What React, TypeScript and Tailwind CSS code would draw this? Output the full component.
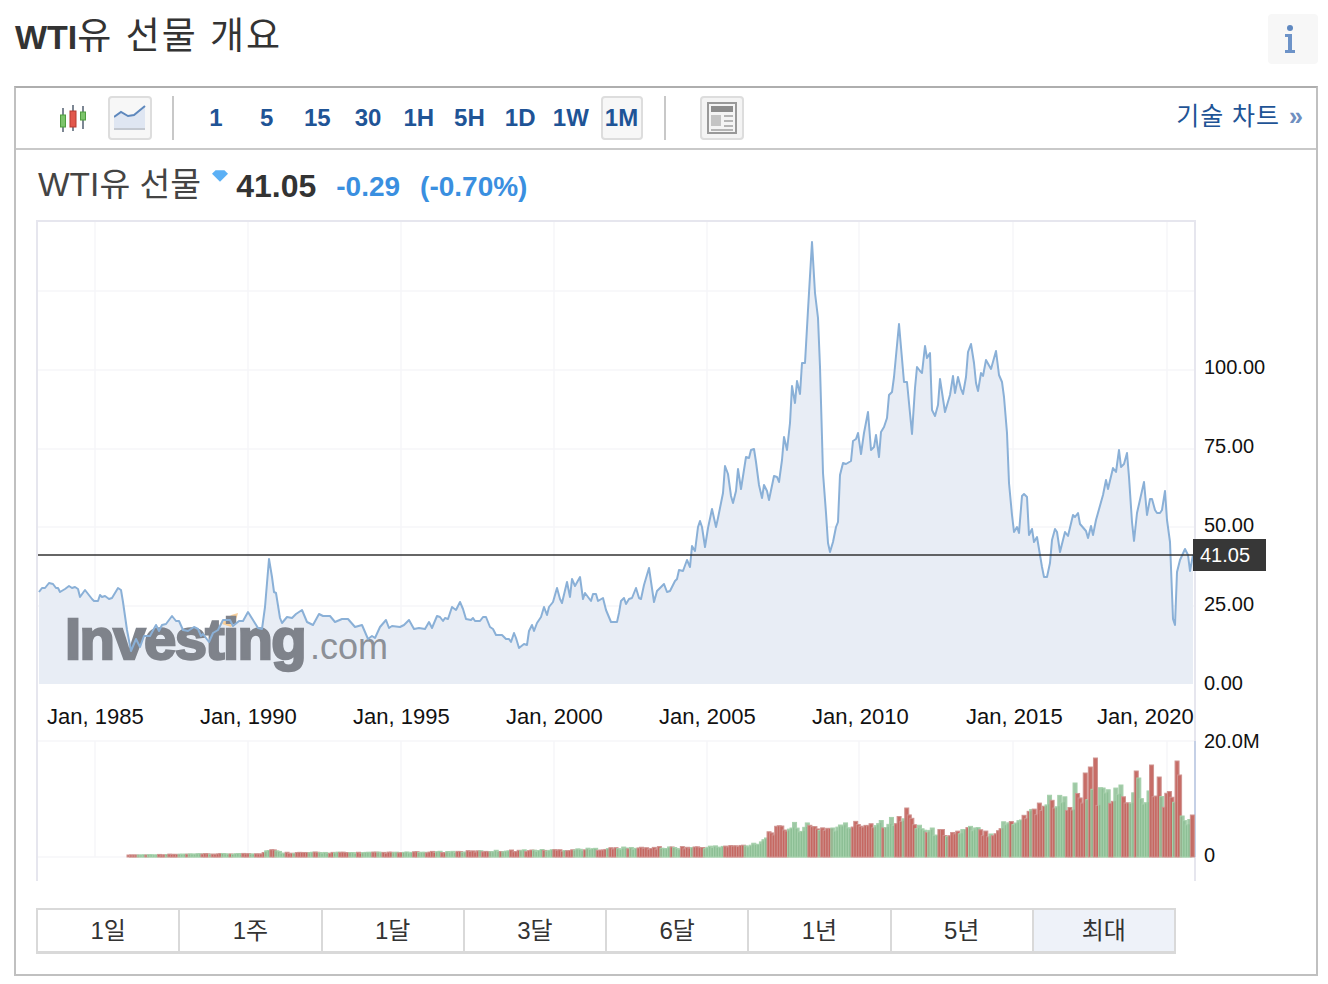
import React from "react";

const font = "[font-family:'Liberation_Sans','Noto_Sans_CJK_KR',sans-serif]";

// price line, page coordinates
const line =
  "39,592 42,588 45,588 49,583 53,584 56,588 58,588 60,592 65,589 69,586 72,588 75,587 78,589 80,597 85,590 92,599 94,601 98,601 100,595 102,597 105,596 109,599 112,598 118,588 121,590 123,602 127,630 131,651 136,639 140,647 144,636 150,636 156,625 159,631 162,625 166,624 172,616 176,621 179,621 183,630 188,631 194,627 198,629 201,636 203,634 209,642 213,633 218,630 223,620 230,620 233,626 239,621 243,621 248,612 253,620 258,628 262,629 265,607 269,559 272,577 274,592 276,593 280,618 282,623 287,617 292,618 296,614 302,610 307,622 313,625 319,614 323,616 330,616 335,622 342,619 348,619 355,627 362,625 368,639 372,636 375,638 380,627 386,620 389,628 392,626 400,627 404,625 409,620 414,629 419,628 425,629 429,622 432,628 437,616 440,617 443,621 445,618 448,619 452,607 456,610 460,602 463,609 466,619 471,620 473,618 475,621 480,621 483,617 486,617 490,627 493,629 496,635 502,635 506,639 509,639 511,642 514,633 516,638 519,648 524,644 527,645 529,631 532,625 534,631 537,623 541,617 544,607 547,615 549,607 553,602 557,588 560,599 562,603 567,582 570,597 572,579 575,586 580,577 583,599 585,593 591,601 593,594 596,594 598,601 603,598 606,610 611,622 613,622 617,622 619,613 621,601 624,598 626,604 629,599 632,598 636,588 639,598 641,599 644,585 649,568 654,602 657,591 664,584 667,592 670,591 675,581 677,579 679,570 683,571 687,560 690,567 692,546 695,551 698,527 700,521 702,527 705,547 708,528 712,509 716,527 718,518 723,493 725,466 728,474 731,496 733,503 736,491 738,469 741,489 746,457 749,458 751,450 754,449 756,462 759,485 762,498 764,485 767,491 769,500 774,476 777,477 779,482 782,460 784,437 787,450 790,423 792,386 795,403 797,381 800,394 802,363 805,363 808,310 812,242 815,293 818,318 820,367 823,473 826,513 828,543 830,552 833,542 836,527 838,522 840,475 843,463 846,464 851,461 853,441 856,439 858,433 861,454 864,433 868,412 871,450 874,447 876,435 879,457 881,432 884,427 887,418 889,395 892,392 894,377 899,324 904,382 907,382 909,403 912,434 915,388 917,367 920,371 922,373 925,346 927,358 930,353 932,410 935,416 938,405 940,379 945,412 950,395 953,376 955,393 958,377 961,389 963,394 966,377 968,352 971,344 974,363 976,383 978,391 981,373 983,376 986,360 991,369 996,351 999,375 1002,382 1004,397 1007,433 1009,483 1012,515 1014,532 1017,527 1019,533 1022,496 1024,494 1027,497 1029,535 1032,529 1034,542 1037,537 1042,567 1044,577 1047,577 1050,563 1052,540 1055,529 1057,532 1060,552 1065,532 1068,536 1073,515 1075,517 1078,513 1080,524 1086,531 1088,538 1091,526 1093,535 1096,520 1103,495 1106,480 1108,489 1113,468 1116,472 1119,450 1121,467 1124,464 1127,453 1129,477 1132,522 1134,541 1137,513 1144,482 1147,515 1150,499 1152,499 1155,510 1157,513 1160,513 1162,510 1165,491 1167,520 1170,542 1173,619 1175,625 1177,572 1180,560 1185,549 1188,555 1190,571 1193,555";

// volume envelope: x, height above the zero line
const envelope: [number, number][] = [
  [127, 2], [170, 3], [260, 4], [268, 9], [280, 5], [400, 5], [500, 7], [560, 8], [620, 10], [700, 11],
  [745, 13], [760, 18], [768, 29], [790, 35], [830, 33], [860, 38], [900, 42], [906, 46], [925, 30],
  [950, 27], [970, 32], [990, 27], [1000, 36], [1020, 46], [1040, 60], [1050, 66], [1065, 62],
  [1090, 70], [1170, 68], [1180, 40], [1193, 38],
];

// the bars that stand out in the last few years
const peaks: [number, number, boolean][] = [
  [906, 49, true], [1072, 74, false], [1082, 84, true], [1088, 90, true], [1094, 99, true], [1119, 85, true],
  [1120, 72, false], [1133, 86, true], [1138, 79, false], [1149, 92, true], [1157, 80, true], [1175, 96, true],
  [1178, 82, true], [1181, 41, false], [1191, 42, true],
];

const volumeAt = (x: number) => {
  for (let i = 1; i < envelope.length; i++) {
    const [x0, h0] = envelope[i - 1];
    const [x1, h1] = envelope[i];
    if (x <= x1) return h0 + ((h1 - h0) * (x - x0)) / (x1 - x0);
  }
  return 36;
};

const bars = Array.from({ length: 418 }, (_, i) => {
  const x = 127 + i * 2.55;
  const n = Math.abs(Math.sin(i * 12.9898) * 43758.5453) % 1;
  const m = Math.sin(i * 0.37 + 1.7) + Math.sin(i * 1.13);
  const h = volumeAt(x) * (0.72 + n * 0.28);
  return { x, h: Math.max(2, h), red: m > 0 };
});

for (const [px, ph, red] of peaks) {
  const i = Math.round((px - 127) / 2.55);
  if (bars[i]) bars[i] = { x: bars[i].x, h: ph, red };
}

const yLabels = [
  ["100.00", 374],
  ["75.00", 453],
  ["50.00", 532],
  ["25.00", 611],
  ["0.00", 690],
  ["20.0M", 748],
  ["0", 862],
] as const;

const xLabels = [
  ["Jan, 1985", 47],
  ["Jan, 1990", 200],
  ["Jan, 1995", 353],
  ["Jan, 2000", 506],
  ["Jan, 2005", 659],
  ["Jan, 2010", 812],
  ["Jan, 2015", 966],
  ["Jan, 2020", 1097],
] as const;

const Chart = () => (
  <svg width={1300} height={670} viewBox="16 220 1300 670" className="block" style={{ fontFamily: "'Liberation Sans', sans-serif" }}>
    {/* grid */}
    {[95, 248, 401, 554, 707, 859, 1013, 1167].map(x => (
      <line key={x} x1={x} x2={x} y1={222} y2={684} stroke="#f6f6f9" strokeWidth={1.5} />
    ))}
    {[95, 248, 401, 554, 707, 859, 1013, 1167].map(x => (
      <line key={x} x1={x} x2={x} y1={741} y2={857} stroke="#f6f6f9" strokeWidth={1.5} />
    ))}
    {[291, 370, 449, 527, 606].map(y => (
      <line key={y} x1={38} x2={1194} y1={y} y2={y} stroke="#f6f6f9" strokeWidth={1.5} />
    ))}
    <line x1={38} x2={1194} y1={741} y2={741} stroke="#f6f6f9" strokeWidth={1.5} />
    <line x1={38} x2={1194} y1={857} y2={857} stroke="#f6f6f9" strokeWidth={1.5} />

    {/* frame */}
    <line x1={37} x2={1196} y1={221} y2={221} stroke="#e6e6ee" strokeWidth={2} />
    <line x1={37} x2={37} y1={220} y2={881} stroke="#e6e6ee" strokeWidth={2} />
    <line x1={1195} x2={1195} y1={220} y2={881} stroke="#e6e6ee" strokeWidth={2} />
    <line x1={1195} x2={1195} y1={741} y2={857} stroke="#c5d0e6" strokeWidth={2} />

    {/* area */}
    <polygon points={`39,684 ${line} 1193,684`} fill="#e8edf5" />

    {/* watermark */}
    <path d="M222 624 q3 -8 16 -11 q-2 9 -7 14 z" fill="#f8cf9a" />
    <text x={65} y={659} fontSize={58} fontWeight={700} letterSpacing={-1.6} fill="#7f838b" stroke="#7f838b" strokeWidth={2.4}>
      Investing
    </text>
    <text x={310} y={659} fontSize={36} fill="#8c9097">
      .com
    </text>

    <polyline points={line} fill="none" stroke="#8ab0d7" strokeWidth={2} strokeLinejoin="round" />

    {/* last price */}
    <line x1={38} x2={1194} y1={555} y2={555} stroke="#333333" strokeWidth={1.5} />
    <rect x={1193} y={539} width={73} height={32} fill="#373737" />
    <text x={1200} y={562} fontSize={20} fill="#ffffff">
      41.05
    </text>

    {/* volume */}
    {bars.map(b => (
      <rect
        key={b.x}
        x={b.x}
        y={857 - b.h}
        width={4}
        height={b.h}
        fill={b.red ? "#c4655f" : "#86ba8f"}
        stroke={b.red ? "#cf9390" : "#a6d1ac"}
        strokeWidth={1}
        fillOpacity={b.red ? 0.95 : 0.8}
      />
    ))}

    {yLabels.map(([t, y]) => (
      <text key={t} x={1204} y={y} fontSize={20} fill="#111111">
        {t}
      </text>
    ))}
    {xLabels.map(([t, x]) => (
      <text key={t} x={x} y={724} fontSize={22} fill="#111111">
        {t}
      </text>
    ))}
  </svg>
);

const CandleIcon = () => (
  <svg width={30} height={30} viewBox="0 0 30 30">
    <g stroke="#7d8794" strokeWidth={2}>
      <line x1={4} x2={4} y1={5} y2={29} />
      <line x1={14} x2={14} y1={2} y2={28} />
      <line x1={24} x2={24} y1={3} y2={26} />
    </g>
    <rect x={1.5} y={12} width={5} height={12} fill="#7cc46b" stroke="#4f9d3f" strokeWidth={1} />
    <rect x={11} y={8} width={6} height={16} fill="#e2574c" stroke="#b53a30" strokeWidth={1} />
    <rect x={21.5} y={9} width={5} height={8} fill="#7cc46b" stroke="#4f9d3f" strokeWidth={1} />
  </svg>
);

const AreaIcon = () => (
  <svg width={32} height={26} viewBox="0 0 32 26">
    <path d="M0 12 L7 7 L14 11 L20 10 L31 1 V24 H0 Z" fill="#dfe6f2" />
    <path d="M0 12 L7 7 L14 11 L20 10 L31 1" fill="none" stroke="#5e88bd" strokeWidth={2} />
    <line x1={0} x2={31} y1={24} y2={24} stroke="#c3c8d0" strokeWidth={2} />
  </svg>
);

const NewsIcon = () => (
  <svg width={30} height={32} viewBox="0 0 30 32">
    <rect x={1} y={1} width={28} height={30} fill="#f4f4f4" stroke="#999999" strokeWidth={2} />
    <rect x={4} y={4} width={22} height={6} fill="#8c8c8c" />
    <rect x={4} y={13} width={10} height={11} fill="#c4c4c4" />
    <g stroke="#b5b5b5" strokeWidth={2}>
      <line x1={17} x2={26} y1={14} y2={14} />
      <line x1={17} x2={26} y1={19} y2={19} />
      <line x1={17} x2={26} y1={24} y2={24} />
      <line x1={4} x2={26} y1={28} y2={28} />
    </g>
  </svg>
);

const InfoIcon = () => (
  <svg width={12} height={28} viewBox="0 0 12 28">
    <circle cx={6} cy={3} r={3} fill="#5f88c0" />
    <path d="M1 9 H8 V25 H11 V28 H1 V25 H4 V12 H1 Z" fill="#6d93c8" />
  </svg>
);

const intervals = ["1", "5", "15", "30", "1H", "5H", "1D", "1W", "1M"];
const ranges = ["1일", "1주", "1달", "3달", "6달", "1년", "5년", "최대"];

export default function App() {
  return (
    <div className={`w-[1328px] h-[984px] bg-white overflow-hidden ${font}`}>
      <div className="h-[86px] pl-[15px] pr-[10px] flex justify-between">
        <h1 className="mt-[13px] text-[37px] leading-[48px] tracking-[2px] text-[#333333]">
          <span className="font-bold text-[34px] tracking-normal">WTI</span>유 선물 개요
        </h1>
        <div className="mt-[14px] w-[50px] h-[50px] rounded bg-[#f7f7f7] flex items-center justify-center pr-[6px]">
          <InfoIcon />
        </div>
      </div>

      <div className="ml-[14px] w-[1304px] h-[890px] border-2 border-[#c0c0c0] border-t-[#aeaeae]">
        <div className="h-[62px] border-b-2 border-[#c9c9c9] pt-[8px] pl-[43px] pr-[12px] flex">
          <div className="w-[30px] h-[44px] flex items-center">
            <CandleIcon />
          </div>
          <div className="ml-[19px] w-[44px] h-[44px] rounded border-2 border-[#dddddd] bg-[#f7f7f7] flex items-center justify-center">
            <AreaIcon />
          </div>
          <div className="ml-[20px] w-[2px] h-[44px] bg-[#c8c8c8]" />
          <div className="ml-[21px] flex gap-[8.7px]">
            {intervals.map(t => (
              <div
                key={t}
                className={`w-[42px] h-[44px] rounded flex items-center justify-center text-[24px] font-bold text-[#1f5496] ${
                  t === "1M" ? "border-2 border-[#dddddd] bg-[#f7f7f7]" : ""
                }`}
              >
                {t}
              </div>
            ))}
          </div>
          <div className="ml-[21px] w-[2px] h-[44px] bg-[#c8c8c8]" />
          <div className="ml-[34px] w-[44px] h-[44px] rounded border-2 border-[#dddddd] bg-[#f4f4f4] flex items-center justify-center">
            <NewsIcon />
          </div>
          <div className="ml-auto h-[42px] flex items-center text-[25px] tracking-[1px] text-[#1f5496]">
            기술 차트<span className="ml-[9px] font-bold text-[#6f8fc0]">»</span>
          </div>
        </div>

        <div className="h-[70px] pl-[22px] flex items-start">
          <span className="mt-[12px] text-[33.5px] leading-[46px] text-[#444444]">WTI유 선물</span>
          <svg width={16} height={13} viewBox="0 0 18 14" className="ml-[11px] mt-[20px]">
            <path d="M0 4 L4 0 H14 L18 4 L9 13 Z" fill="#5bb0f5" />
          </svg>
          <span className="ml-[8px] mt-[16px] text-[32px] leading-[40px] font-bold text-[#333333]">41.05</span>
          <span className="ml-[20px] mt-[18px] text-[28px] leading-[38px] font-bold text-[#3a8fe0]">-0.29</span>
          <span className="ml-[20px] mt-[18px] text-[28px] leading-[38px] font-bold text-[#3a8fe0]">(-0.70%)</span>
        </div>

        <Chart />

        <div className="mt-[18px] ml-[20px] w-[1140px] h-[46px] flex border-2 border-b-[3px] border-[#d9d9d9]">
          {ranges.map((t, i) => (
            <div
              key={t}
              className={`flex-1 flex items-center justify-center text-[24px] text-[#333333] ${
                i < 7 ? "border-r-2 border-[#d9d9d9]" : "bg-[#eef2f9]"
              }`}
            >
              {t}
            </div>
          ))}
        </div>
      </div>
    </div>
  );
}
